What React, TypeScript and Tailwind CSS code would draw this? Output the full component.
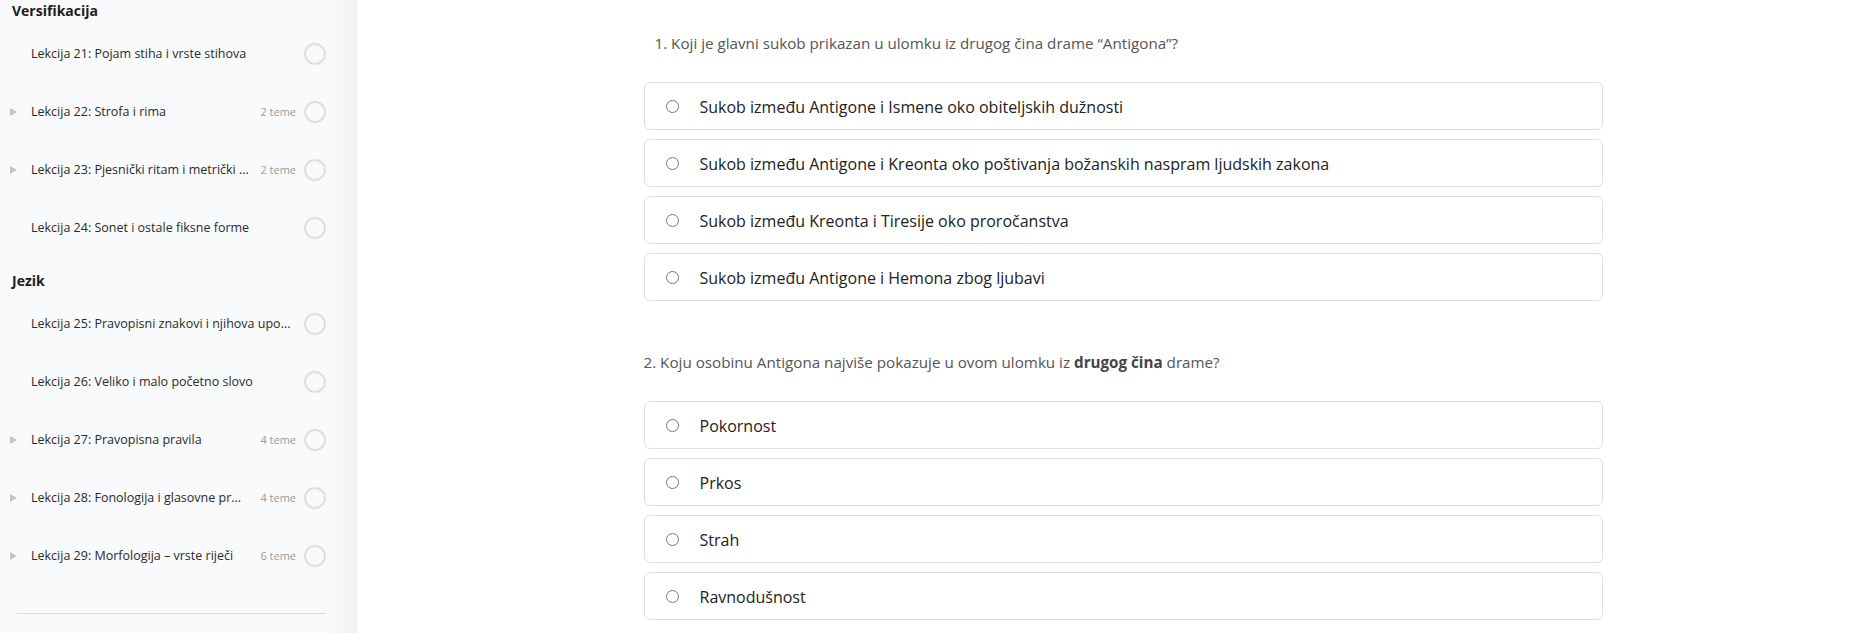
import React from "react";

type Lesson = { title: string; topics?: string };

const sections: { name: string; lessons: Lesson[] }[] = [
  {
    name: "Versifikacija",
    lessons: [
      { title: "Lekcija 21: Pojam stiha i vrste stihova" },
      { title: "Lekcija 22: Strofa i rima", topics: "2 teme" },
      { title: "Lekcija 23: Pjesnički ritam i metrički ...", topics: "2 teme" },
      { title: "Lekcija 24: Sonet i ostale fiksne forme" },
    ],
  },
  {
    name: "Jezik",
    lessons: [
      { title: "Lekcija 25: Pravopisni znakovi i njihova upo..." },
      { title: "Lekcija 26: Veliko i malo početno slovo" },
      { title: "Lekcija 27: Pravopisna pravila", topics: "4 teme" },
      { title: "Lekcija 28: Fonologija i glasovne pr...", topics: "4 teme" },
      { title: "Lekcija 29: Morfologija – vrste riječi", topics: "6 teme" },
    ],
  },
];

const q1 = [
  "Sukob između Antigone i Ismene oko obiteljskih dužnosti",
  "Sukob između Antigone i Kreonta oko poštivanja božanskih naspram ljudskih zakona",
  "Sukob između Kreonta i Tiresije oko proročanstva",
  "Sukob između Antigone i Hemona zbog ljubavi",
];

const q2 = ["Pokornost", "Prkos", "Strah", "Ravnodušnost"];

function LessonRow({ lesson }: { lesson: Lesson }) {
  return (
    <div className="h-[58px] flex items-center">
      <div className="w-[31px] shrink-0 flex items-center pl-[10px]">
        {lesson.topics && (
          <svg width="7" height="8" viewBox="0 0 7 8">
            <path d="M0 0 L7 4 L0 8 Z" fill="#c4c4c4" />
          </svg>
        )}
      </div>
      <span className="flex-1 min-w-0 whitespace-nowrap text-[12.5px] text-[#2a2a2a]">
        {lesson.title}
      </span>
      {lesson.topics && (
        <span className="ml-1 text-[11px] text-[#9a9a9a] whitespace-nowrap">{lesson.topics}</span>
      )}
      <span className="ml-2 w-[22px] h-[22px] shrink-0 rounded-full border-2 border-[#dedfe1]" />
    </div>
  );
}

function Option({ text }: { text: string }) {
  return (
    <label className="h-[48px] flex items-center border border-[#dcdee2] rounded-md bg-white">
      <span className="ml-[21px] w-[13px] h-[13px] rounded-full border border-[#767676] shrink-0" />
      <span className="ml-[21px] pt-[2px] text-[16px] text-[#222]">{text}</span>
    </label>
  );
}

export default function App() {
  return (
    <div
      className="flex w-full h-[633px] overflow-hidden bg-white"
      style={{ fontFamily: '"Open Sans", "Noto Sans", sans-serif' }}
    >
      <aside className="w-[357px] shrink-0 h-full bg-[linear-gradient(to_right,#f9fafb_91%,#f0f1f3)] pr-[31px]">
        {sections.map((s, i) => (
          <div key={s.name}>
            <div className={`${i === 0 ? "pt-0" : "pt-[13px]"} h-[20px] box-content pl-[12px] flex items-center text-[14px] font-bold text-[#1d1d1d]`}>
              {s.name}
            </div>
            <div className="mt-[5px]">
              {s.lessons.map((l) => (
                <LessonRow key={l.title} lesson={l} />
              ))}
            </div>
          </div>
        ))}
        <div className="mt-[28px] ml-[17px] border-t border-[#d9dadc]" />
      </aside>
      <main className="flex-1 flex justify-center pl-4">
        <div className="w-[959px]">
          <div className="h-[86px] pt-[32px] pl-[11px] text-[15.2px] text-[#555]">
            1. Koji je glavni sukob prikazan u ulomku iz drugog čina drame “Antigona”?
          </div>
          <div className="flex flex-col gap-[9px] -mt-[4px]">
            {q1.map((t) => (
              <Option key={t} text={t} />
            ))}
          </div>
          <div className="mt-[51px] h-[20px] flex items-center text-[15.2px] text-[#555]">
            <span>
              2. Koju osobinu Antigona najviše pokazuje u ovom ulomku iz{" "}
              <b className="font-bold text-[#444]">drugog čina</b> drame?
            </span>
          </div>
          <div className="flex flex-col gap-[9px] mt-[29px]">
            {q2.map((t) => (
              <Option key={t} text={t} />
            ))}
          </div>
        </div>
      </main>
    </div>
  );
}
